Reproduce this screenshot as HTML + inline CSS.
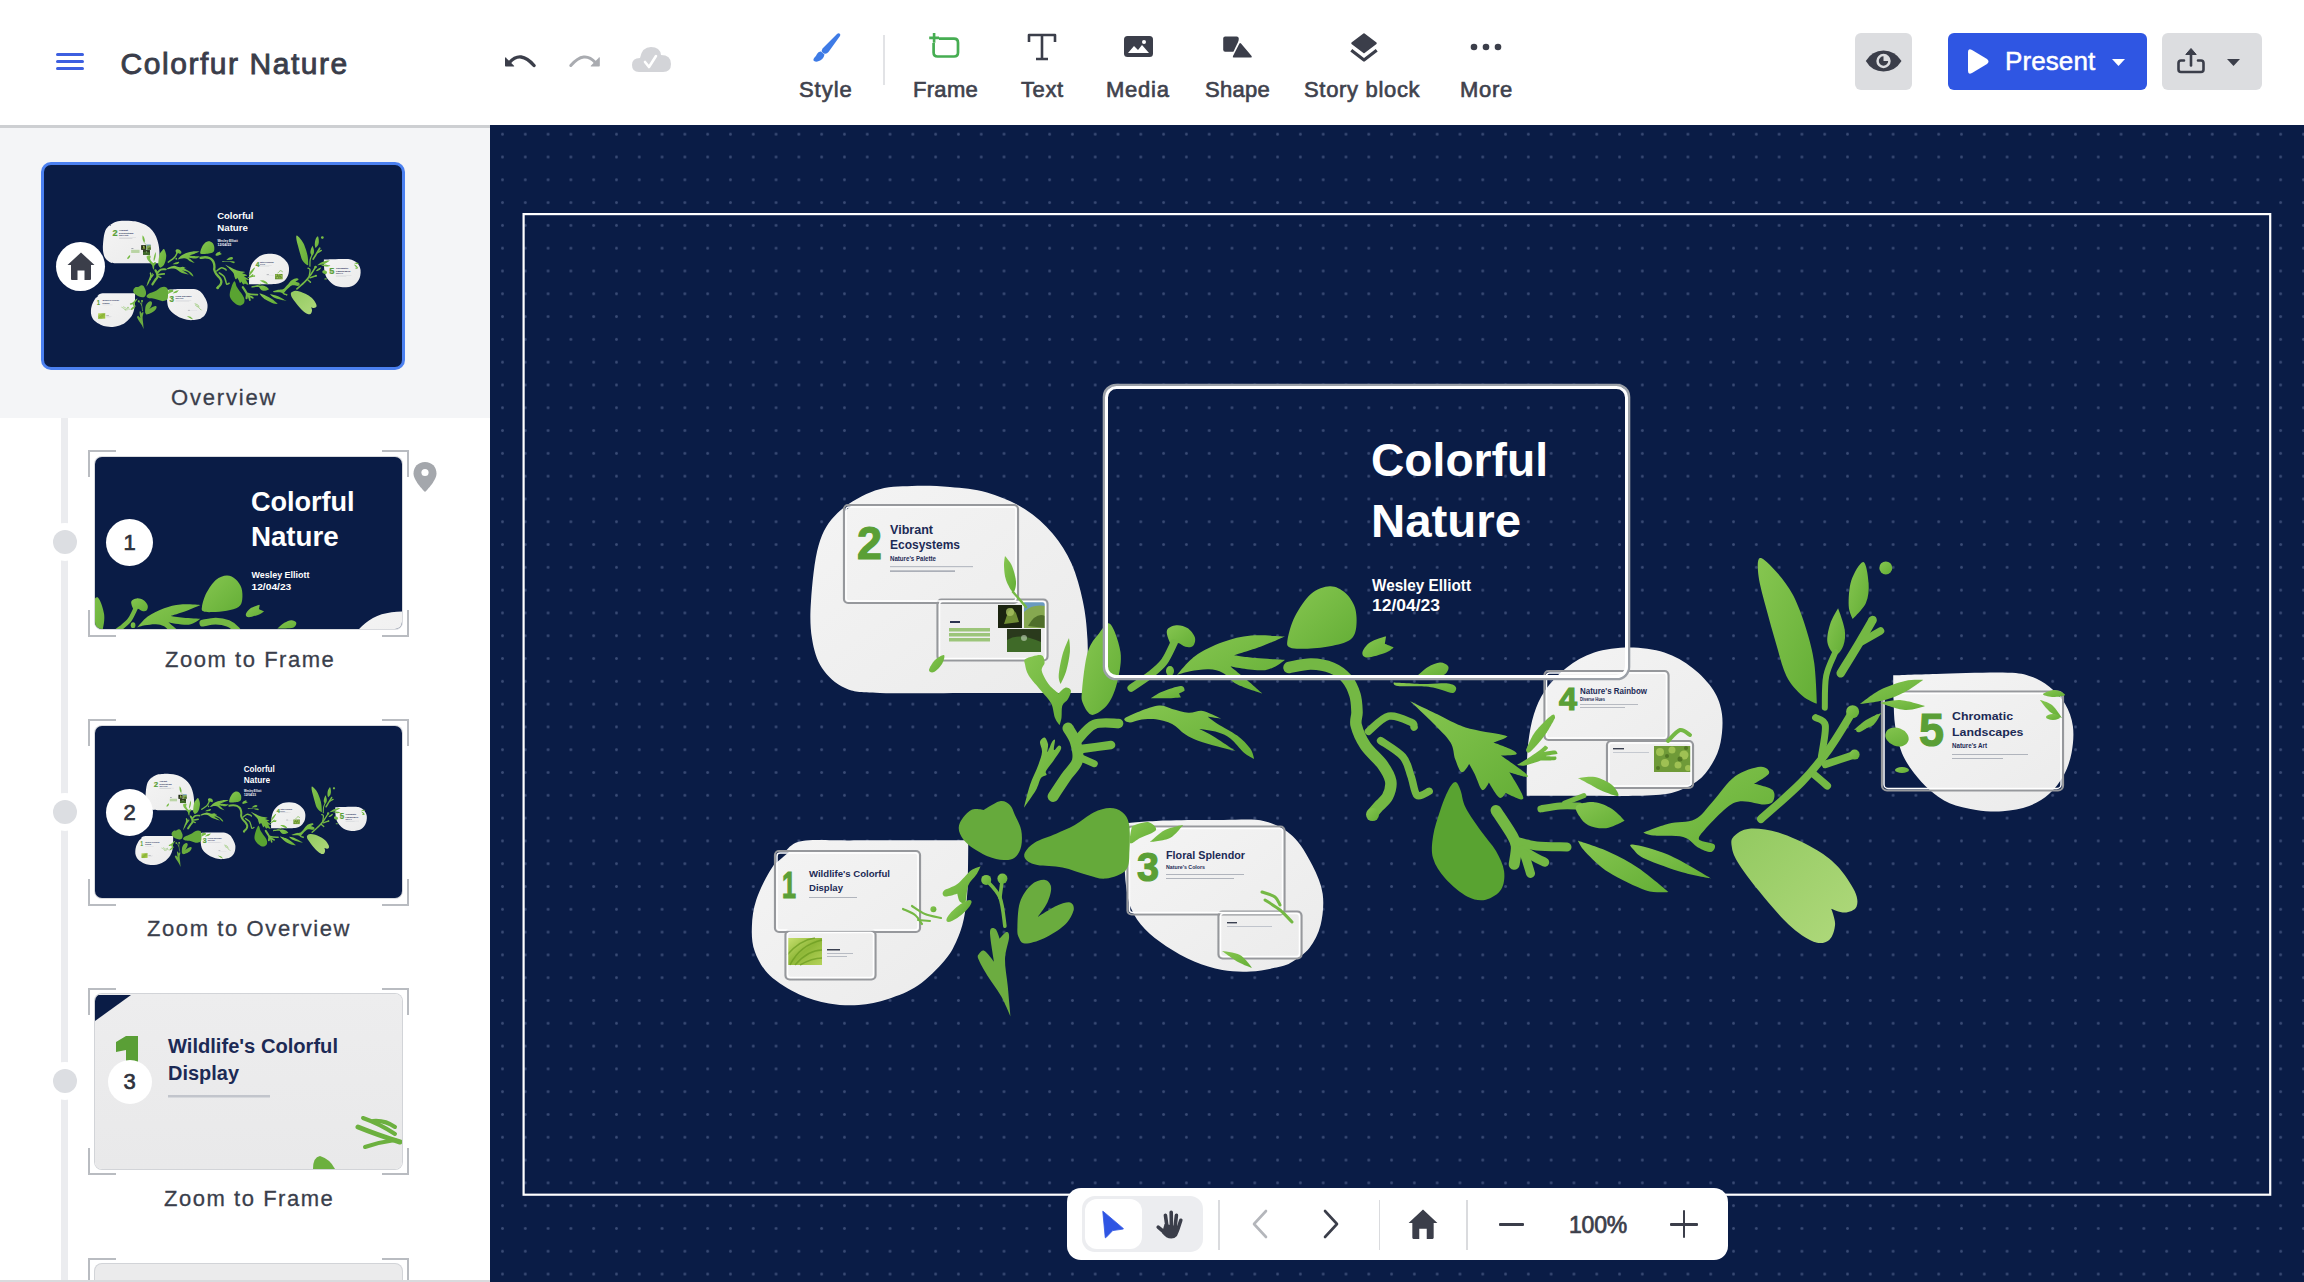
<!DOCTYPE html>
<html><head><meta charset="utf-8">
<style>
*{margin:0;padding:0;box-sizing:border-box}
html,body{width:2304px;height:1282px;overflow:hidden;background:#fff;font-family:"Liberation Sans",sans-serif}
.abs{position:absolute}
#header{position:absolute;left:0;top:0;width:2304px;height:125px;background:#fff}
#sidebar{position:absolute;left:0;top:125px;width:490px;height:1157px;background:#fff;overflow:hidden}
#canvas{position:absolute;left:490px;top:125px;width:1814px;height:1157px;background-color:#0a1c46;overflow:hidden;
 background-image:radial-gradient(circle at center,#3a4b75 0,#34456f 1.1px,rgba(10,28,70,0) 1.8px);
 background-size:22.81px 22.81px;background-position:1.1px -2.2px}
.lbl{position:absolute;font-size:22px;color:#3a3e4b;white-space:nowrap;-webkit-text-stroke:0.3px #3a3e4b}
.tb{position:absolute;font-size:22px;color:#3f424d;white-space:nowrap;-webkit-text-stroke:0.65px #3f424d}
</style></head>
<body>
<svg width="0" height="0" style="position:absolute">
<defs>
 <linearGradient id="blobg" x1="0" y1="0" x2="1" y2="1">
  <stop offset="0" stop-color="#f4f4f4"/><stop offset="1" stop-color="#ebebeb"/>
 </linearGradient>
 <linearGradient id="lg1" x1="0" y1="0" x2="1" y2="1">
  <stop offset="0" stop-color="#86c650"/><stop offset="1" stop-color="#64ae36"/>
 </linearGradient>
 <linearGradient id="lg2" x1="0" y1="0" x2="1" y2="1">
  <stop offset="0" stop-color="#92c960"/><stop offset="1" stop-color="#b0d97c"/>
 </linearGradient>
 <linearGradient id="lg3" x1="0" y1="0" x2="1" y2="1">
  <stop offset="0" stop-color="#6ab53e"/><stop offset="1" stop-color="#5aa333"/>
 </linearGradient>
 <linearGradient id="leafphoto" x1="0" y1="0" x2="1" y2="1">
  <stop offset="0" stop-color="#c8e070"/><stop offset="0.5" stop-color="#8fb838"/><stop offset="1" stop-color="#b5d35a"/>
 </linearGradient>
<g id="scene">
 <!-- blobs -->
 <g fill="url(#blobg)">
  <path d="M1087.5,693.0 C1087.5,693.0 1014.6,693.0 980.0,693.0 C945.4,693.0 902.5,693.8 880.0,693.0 C857.5,692.2 854.7,692.2 845.0,688.0 C835.3,683.8 827.5,676.2 822.0,668.0 C816.5,659.8 813.8,649.7 812.0,638.5 C810.2,627.3 809.9,616.6 811.0,601.0 C812.1,585.4 814.3,559.7 818.7,545.0 C823.1,530.3 828.1,522.1 837.5,513.0 C846.9,503.9 862.6,495.1 875.0,490.6 C887.4,486.1 899.5,486.6 912.0,486.0 C924.5,485.4 937.5,485.9 950.0,487.0 C962.5,488.1 974.5,488.8 987.0,492.5 C999.5,496.2 1013.7,502.1 1024.7,509.0 C1035.7,515.9 1045.0,524.6 1052.8,533.7 C1060.6,542.8 1066.5,552.4 1071.5,563.6 C1076.5,574.8 1080.1,588.3 1082.8,601.0 C1085.5,613.7 1086.7,624.7 1087.5,640.0 C1088.3,655.3 1087.5,693.0 1087.5,693.0 Z"/>
  <path d="M968.3,840.4 C968.3,840.4 968.2,875.9 967.5,889.0 C966.8,902.1 965.6,910.3 963.8,919.0 C961.9,927.7 959.6,934.3 956.4,941.2 C953.2,948.1 951.0,953.0 944.6,960.4 C938.2,967.8 927.3,979.2 917.9,985.6 C908.5,992.0 898.1,995.8 888.2,999.0 C878.3,1002.2 868.5,1004.3 858.6,1005.0 C848.7,1005.7 838.9,1005.1 829.0,1003.4 C819.1,1001.6 809.2,999.2 799.3,994.5 C789.4,989.8 777.0,982.4 769.6,975.3 C762.2,968.1 757.8,959.8 754.8,951.6 C751.8,943.5 751.6,935.0 751.9,926.4 C752.1,917.8 753.3,908.9 756.3,899.7 C759.2,890.6 764.9,879.4 769.6,871.5 C774.3,863.6 779.0,857.3 784.5,852.2 C790.0,847.1 791.4,843.1 802.3,841.1 C813.2,839.1 822.3,840.5 850.0,840.4 C877.7,840.3 968.3,840.4 968.3,840.4 Z"/>
  <path d="M1124.7,823.3 C1124.7,823.3 1149.7,821.0 1166.0,820.5 C1182.3,820.0 1205.9,819.9 1222.3,820.0 C1238.7,820.1 1252.8,818.5 1264.5,821.2 C1276.2,823.9 1284.5,828.7 1292.5,836.0 C1300.5,843.3 1307.2,855.3 1312.2,865.0 C1317.2,874.7 1321.3,884.0 1322.7,894.0 C1324.1,904.0 1322.8,916.0 1320.6,925.0 C1318.4,934.0 1314.2,941.8 1309.4,948.0 C1304.6,954.2 1297.2,958.8 1292.0,962.0 C1286.8,965.2 1285.4,965.4 1278.5,967.0 C1271.6,968.6 1259.8,971.0 1250.4,971.5 C1241.0,972.0 1231.7,971.6 1222.3,970.0 C1212.9,968.4 1203.5,965.6 1194.2,961.6 C1184.9,957.6 1174.4,951.6 1166.2,946.2 C1158.0,940.8 1151.0,935.6 1145.1,929.3 C1139.2,923.0 1134.3,916.5 1131.0,908.3 C1127.7,900.1 1126.5,889.6 1125.4,880.2 C1124.4,870.8 1124.8,861.5 1124.7,852.0 C1124.6,842.5 1124.7,823.3 1124.7,823.3 Z"/>
  <path d="M1526.8,795.7 C1526.8,795.7 1526.5,779.3 1526.8,770.4 C1527.0,761.5 1527.1,751.7 1528.3,742.3 C1529.5,732.9 1531.1,722.9 1533.9,714.2 C1536.7,705.6 1539.7,698.1 1545.1,690.4 C1550.5,682.7 1558.0,674.2 1566.2,667.9 C1574.4,661.6 1583.7,655.9 1594.2,652.5 C1604.7,649.1 1617.6,647.5 1629.3,647.5 C1641.0,647.5 1653.9,649.1 1664.4,652.5 C1674.9,655.9 1684.3,661.6 1692.5,667.9 C1700.7,674.2 1708.7,682.7 1713.6,690.4 C1718.5,698.1 1720.8,705.6 1722.0,714.2 C1723.2,722.9 1722.2,734.1 1720.6,742.3 C1719.0,750.5 1716.2,756.8 1712.2,763.4 C1708.2,770.0 1703.5,776.7 1696.7,781.6 C1689.9,786.5 1681.5,790.5 1671.5,792.9 C1661.5,795.2 1651.7,795.2 1636.4,795.7 C1621.2,796.2 1598.3,795.7 1580.0,795.7 C1561.7,795.7 1526.8,795.7 1526.8,795.7 Z"/>
  <path d="M1893.2,675.3 C1893.2,675.3 1918.1,674.3 1936.3,673.9 C1954.5,673.5 1987.1,672.3 2002.6,672.6 C2018.1,672.9 2021.5,673.6 2029.2,675.9 C2036.9,678.2 2043.0,681.9 2049.0,686.5 C2055.0,691.1 2061.0,697.2 2065.0,703.8 C2069.0,710.4 2071.8,718.1 2072.9,726.3 C2074.0,734.5 2073.2,744.6 2071.6,752.8 C2070.0,761.0 2067.4,768.5 2063.6,775.4 C2059.8,782.3 2054.7,788.9 2049.0,794.0 C2043.3,799.1 2036.9,803.0 2029.2,805.9 C2021.5,808.8 2011.4,810.5 2002.6,811.2 C1993.8,811.9 1984.9,811.2 1976.1,809.9 C1967.3,808.6 1957.3,806.5 1949.6,803.2 C1941.9,799.9 1935.7,795.1 1929.7,790.0 C1923.7,784.9 1918.5,778.9 1913.8,772.7 C1909.1,766.5 1904.9,760.5 1901.8,752.8 C1898.7,745.1 1896.6,735.1 1895.2,726.3 C1893.8,717.5 1893.9,708.3 1893.6,699.8 C1893.3,691.3 1893.2,675.3 1893.2,675.3 Z"/>
 </g>
 <!-- slide photos / bars -->
 <rect x="998" y="605" width="24" height="23" fill="#1b2410"/>
 <path d="M1004,624 L1008,612 L1012,608 L1016,613 L1019,622 Z" fill="#7a9a3a" opacity="0.9"/>
 <circle cx="1010" cy="612" r="4" fill="#a8c060" opacity="0.8"/>
 <rect x="1024" y="602" width="21" height="26" fill="#6a9ac0"/>
 <path d="M1024,628 L1024,612 Q1032,604 1045,606 L1045,628 Z" fill="#86a850"/>
 <path d="M1028,626 Q1036,612 1045,616 L1045,628 Z" fill="#4f6e2a"/>
 <rect x="1007" y="629" width="34" height="23" fill="#2a3a1c"/>
 <path d="M1007,652 L1007,640 Q1020,632 1041,642 L1041,652 Z" fill="#3f6a28"/>
 <circle cx="1024" cy="638" r="3" fill="#c8d8c0" opacity="0.6"/>
 <rect x="950" y="621" width="10" height="2" fill="#2a3350"/>
 <rect x="949" y="628" width="41" height="3.5" fill="#9cc57a"/>
 <rect x="949" y="633" width="41" height="3.5" fill="#9cc57a"/>
 <rect x="949" y="638" width="41" height="3.5" fill="#9cc57a"/>
 <rect x="787" y="938" width="35" height="27" fill="url(#leafphoto)"/>
 <path d="M790,965 Q800,945 822,940 M795,965 Q808,950 822,950 M800,965 Q812,958 822,958 M787,955 Q800,940 815,938" stroke="#6a9a20" stroke-width="1.5" fill="none" opacity="0.7"/>
 <rect x="1654" y="746" width="37" height="26" fill="#6f9a38"/>
 <g fill="#a8c858" opacity="0.85"><circle cx="1660" cy="752" r="4"/><circle cx="1672" cy="750" r="3.5"/><circle cx="1684" cy="755" r="4.5"/><circle cx="1665" cy="763" r="4"/><circle cx="1678" cy="765" r="3.5"/><circle cx="1688" cy="768" r="3"/></g>
 <g fill="#4a6e20" opacity="0.8"><circle cx="1667" cy="756" r="2"/><circle cx="1680" cy="759" r="2.5"/><circle cx="1658" cy="768" r="2"/><circle cx="1686" cy="748" r="2"/></g>
 <!-- navy corner triangles -->
 <path d="M776,852 L789,852 L776,863 Z" fill="#0a1c46"/>
 <path d="M845,506 L851,506 L845,511 Z" fill="#0a1c46"/>
 <!-- slide texts -->
 <g font-family="Liberation Sans" font-weight="bold">
  <text x="857" y="558.5" font-size="46" fill="#5a9f36" stroke="#5a9f36" stroke-width="1.2" textLength="25" lengthAdjust="spacingAndGlyphs">2</text>
  <text x="890" y="533.7" font-size="12.3" fill="#1c2a55" textLength="43" lengthAdjust="spacingAndGlyphs">Vibrant</text>
  <text x="890" y="549.4" font-size="12.3" fill="#1c2a55" textLength="70" lengthAdjust="spacingAndGlyphs">Ecosystems</text>
  <text x="890" y="561" font-size="6.3" fill="#1c2a55" textLength="46" lengthAdjust="spacingAndGlyphs">Nature's Palette</text>
  <rect x="890" y="566" width="83" height="1.2" fill="#b8bcc4"/>
  <rect x="890" y="570.5" width="65" height="1.2" fill="#8d93a0"/>

  <text x="782" y="898.2" font-size="37" fill="#5a9f36" stroke="#5a9f36" stroke-width="1.2" textLength="14" lengthAdjust="spacingAndGlyphs">1</text>
  <text x="809" y="877.4" font-size="9.8" fill="#1c2a55" textLength="81" lengthAdjust="spacingAndGlyphs">Wildlife's Colorful</text>
  <text x="809" y="890.5" font-size="9.8" fill="#1c2a55" textLength="34" lengthAdjust="spacingAndGlyphs">Display</text>
  <rect x="809" y="897" width="48" height="1" fill="#b0b4bc"/>
  <rect x="827" y="949" width="13" height="1.5" fill="#3a4050"/>
  <rect x="827" y="953" width="26" height="1" fill="#b8bcc4"/>
  <rect x="827" y="956" width="20" height="1" fill="#b8bcc4"/>

  <text x="1137" y="881" font-size="41" fill="#5a9f36" stroke="#5a9f36" stroke-width="1.2" textLength="22" lengthAdjust="spacingAndGlyphs">3</text>
  <text x="1166" y="858.9" font-size="11.2" fill="#1c2a55" textLength="79" lengthAdjust="spacingAndGlyphs">Floral Splendor</text>
  <text x="1166" y="868.7" font-size="6" fill="#1c2a55" textLength="39" lengthAdjust="spacingAndGlyphs">Nature's Colors</text>
  <rect x="1166" y="874" width="78" height="1" fill="#b0b4bc"/>
  <rect x="1166" y="878" width="68" height="1" fill="#b0b4bc"/>
  <rect x="1227" y="922" width="10" height="1.4" fill="#3a4050"/>
  <rect x="1227" y="926" width="45" height="1" fill="#c0c4cc"/>

  <text x="1559" y="710" font-size="32" fill="#5a9f36" stroke="#5a9f36" stroke-width="1.2" textLength="18" lengthAdjust="spacingAndGlyphs">4</text>
  <text x="1580" y="693.5" font-size="8.2" fill="#1c2a55" textLength="67" lengthAdjust="spacingAndGlyphs">Nature's Rainbow</text>
  <text x="1580" y="700.5" font-size="5" fill="#1c2a55" textLength="25" lengthAdjust="spacingAndGlyphs">Diverse Hues</text>
  <rect x="1580" y="704" width="58" height="0.9" fill="#b0b4bc"/>
  <rect x="1580" y="707" width="45" height="0.9" fill="#b0b4bc"/>
  <rect x="1613" y="748" width="11" height="1.4" fill="#3a4050"/>
  <rect x="1613" y="752" width="36" height="0.9" fill="#c0c4cc"/>

  <text x="1919" y="745.5" font-size="47" fill="#5a9f36" stroke="#5a9f36" stroke-width="1.2" textLength="25" lengthAdjust="spacingAndGlyphs">5</text>
  <text x="1952" y="719.7" font-size="11" fill="#1c2a55" textLength="61" lengthAdjust="spacingAndGlyphs">Chromatic</text>
  <text x="1952" y="735.9" font-size="11" fill="#1c2a55" textLength="71.5" lengthAdjust="spacingAndGlyphs">Landscapes</text>
  <text x="1952" y="747.5" font-size="6.3" fill="#1c2a55" textLength="35" lengthAdjust="spacingAndGlyphs">Nature's Art</text>
  <rect x="1952" y="754" width="76" height="1" fill="#b0b4bc"/>
  <rect x="1952" y="758" width="51" height="1" fill="#b0b4bc"/>
 </g>
 <!-- slide frames -->
 <g fill="none" style="visibility:var(--fv, visible)">
  <g stroke="#96989c" stroke-width="2.2">
   <rect x="844" y="505" width="174" height="98" rx="4"/>
   <rect x="937.5" y="599.5" width="110" height="61" rx="4"/>
   <rect x="775" y="851" width="145" height="81" rx="4"/>
   <rect x="785.5" y="930.5" width="90" height="49" rx="4"/>
   <rect x="1127.5" y="826.5" width="157" height="88" rx="4"/>
   <rect x="1218.5" y="911.5" width="83" height="47" rx="4"/>
   <rect x="1544.5" y="671" width="124" height="69" rx="4"/>
   <rect x="1607" y="741" width="86" height="47" rx="4"/>
   <rect x="1882" y="691.5" width="181" height="99" rx="5"/>
  </g>
  <g stroke="#ffffff" stroke-width="1.5">
   <rect x="846" y="507" width="170" height="94" rx="3"/>
   <rect x="939.5" y="601.5" width="106" height="57" rx="3"/>
   <rect x="777" y="853" width="141" height="77" rx="3"/>
   <rect x="787.5" y="932.5" width="86" height="45" rx="3"/>
   <rect x="1129.5" y="828.5" width="153" height="84" rx="3"/>
   <rect x="1220.5" y="913.5" width="79" height="43" rx="3"/>
   <rect x="1546.5" y="673" width="120" height="65" rx="3"/>
   <rect x="1609" y="743" width="82" height="43" rx="3"/>
   <rect x="1884" y="693.5" width="177" height="95" rx="4"/>
  </g>
 </g>
 <!-- title text -->
 <g font-family="Liberation Sans" font-weight="bold" fill="#ffffff">
  <text x="1371" y="476" font-size="47" textLength="177" lengthAdjust="spacingAndGlyphs">Colorful</text>
  <text x="1371" y="536.7" font-size="47" textLength="150" lengthAdjust="spacingAndGlyphs">Nature</text>
  <text x="1372" y="590.8" font-size="16.2" textLength="99" lengthAdjust="spacingAndGlyphs">Wesley Elliott</text>
  <text x="1372" y="610.6" font-size="16.2" textLength="68" lengthAdjust="spacingAndGlyphs">12/04/23</text>
 </g>
 <!-- leaves -->
 <g id="leaves" fill="url(#lg1)" stroke-linecap="round" stroke-linejoin="round">
    <path d="M1110.2,624.0 C1113.8,627.1 1119.2,642.7 1120.5,652.1 C1121.8,661.5 1119.7,671.6 1117.7,680.2 C1115.7,688.8 1112.5,697.8 1108.3,703.6 C1104.1,709.4 1096.6,714.9 1092.4,714.9 C1088.2,714.9 1084.7,707.8 1083.0,703.6 C1081.3,699.4 1081.3,698.2 1082.1,689.6 C1082.9,681.0 1084.9,661.5 1087.7,652.1 C1090.5,642.7 1095.2,638.1 1099.0,633.4 C1102.8,628.7 1106.6,620.9 1110.2,624.0 Z"/>
  <path d="M1069.0,638.1 C1069.0,638.1 1070.4,646.6 1069.9,652.1 C1069.4,657.6 1067.8,665.6 1066.2,670.9 C1064.7,676.2 1060.6,684.0 1060.6,684.0 C1060.6,684.0 1058.4,680.3 1058.7,675.5 C1059.0,670.7 1060.7,661.2 1062.4,655.0 C1064.1,648.8 1069.0,638.1 1069.0,638.1 Z"/>
  <path d="M1025.9,658.7 C1028.6,657.2 1037.8,654.4 1040.9,655.0 C1044.0,655.6 1044.4,659.8 1044.6,662.4 C1044.8,665.0 1041.0,667.1 1041.8,670.9 C1042.6,674.6 1046.5,681.2 1049.3,684.9 C1052.1,688.6 1058.7,693.3 1058.7,693.3 C1058.7,693.3 1063.2,688.2 1065.2,687.7 C1067.2,687.2 1070.4,688.6 1070.9,690.5 C1071.4,692.4 1069.4,696.5 1068.0,699.0 C1066.6,701.5 1063.5,702.4 1062.4,705.5 C1061.3,708.6 1062.0,714.4 1061.5,717.7 C1061.0,721.0 1059.6,725.2 1059.6,725.2 C1059.6,725.2 1056.3,721.3 1054.9,717.7 C1053.5,714.1 1053.5,708.1 1051.2,703.6 C1048.9,699.1 1044.7,695.2 1040.9,690.5 C1037.2,685.8 1031.4,679.9 1028.7,675.5 C1026.0,671.1 1025.5,667.1 1025.0,664.3 C1024.5,661.5 1023.3,660.2 1025.9,658.7 Z"/>
  <path d="M1053.1,796.4 C1055.2,793.2 1062.0,782.9 1066.0,777.0 C1070.0,771.1 1075.8,766.7 1077.4,760.9 C1079.0,755.1 1077.1,747.6 1075.5,742.1 C1073.9,736.6 1069.2,730.4 1068.0,728.1" fill="none" stroke="#74b844" stroke-width="11"/>
  <path d="M1077.4,740.3 C1080.2,737.6 1087.4,727.1 1094.3,724.3 C1101.2,721.5 1114.5,723.5 1118.6,723.4" fill="none" stroke="#74b844" stroke-width="9.5"/>
  <path d="M1083.0,748.7 C1087.7,748.1 1106.4,745.6 1111.1,745.0" fill="none" stroke="#74b844" stroke-width="8.5"/>
  <path d="M1081.2,758.0 C1083.4,759.0 1092.1,762.8 1094.3,763.7" fill="none" stroke="#74b844" stroke-width="7"/>
  <path d="M1024.0,807.7 C1024.0,807.7 1027.7,792.0 1030.0,785.0 C1032.3,778.0 1036.1,771.0 1038.1,765.5 C1040.1,760.0 1041.7,755.9 1042.0,752.0 C1042.3,748.1 1039.6,744.4 1040.0,742.0 C1040.4,739.6 1043.3,737.2 1044.6,737.5 C1045.9,737.8 1047.5,741.6 1048.0,744.0 C1048.5,746.4 1046.8,752.3 1047.5,752.0 C1048.2,751.7 1050.8,744.0 1052.0,742.0 C1053.2,740.0 1054.7,738.7 1055.0,740.0 C1055.3,741.3 1053.3,749.1 1054.0,750.0 C1054.7,750.9 1057.8,745.7 1059.0,745.5 C1060.2,745.3 1061.8,746.6 1061.0,749.0 C1060.2,751.4 1056.5,756.3 1054.0,760.0 C1051.5,763.7 1047.2,768.5 1046.0,771.0 C1044.8,773.5 1047.3,773.8 1046.5,775.0 C1045.7,776.2 1042.8,775.5 1041.0,778.0 C1039.2,780.5 1038.8,785.0 1036.0,790.0 C1033.2,795.0 1024.0,807.7 1024.0,807.7 Z"/>
  <path d="M960.0,822.5 C961.9,818.5 967.2,812.1 971.2,810.0 C975.2,807.9 983.7,810.0 983.7,810.0 C983.7,810.0 995.5,802.0 999.9,801.2 C1004.3,800.4 1007.4,802.7 1009.9,805.0 C1012.4,807.3 1013.0,810.8 1014.9,815.0 C1016.8,819.2 1020.2,824.8 1021.2,830.0 C1022.2,835.2 1022.2,841.6 1021.2,846.2 C1020.2,850.8 1017.8,855.1 1014.9,857.4 C1012.0,859.7 1008.3,860.1 1003.7,859.9 C999.1,859.7 993.3,858.7 987.5,856.2 C981.7,853.7 973.3,848.6 968.7,844.9 C964.1,841.1 961.5,837.4 960.0,833.7 C958.5,830.0 958.1,826.5 960.0,822.5 Z" fill="#66aa3c"/>
  <path d="M1024.9,852.4 C1026.4,849.5 1029.7,845.5 1034.9,842.4 C1040.1,839.3 1049.4,836.6 1056.1,833.7 C1062.8,830.8 1068.5,828.5 1074.8,825.0 C1081.0,821.5 1087.8,815.3 1093.6,812.5 C1099.4,809.7 1105.1,808.2 1109.8,808.1 C1114.5,808.0 1118.8,809.4 1122.0,812.0 C1125.2,814.6 1127.8,817.7 1129.0,824.0 C1130.2,830.3 1130.0,842.3 1129.5,850.0 C1129.0,857.7 1129.9,865.2 1126.0,870.0 C1122.1,874.8 1112.5,877.8 1106.0,878.6 C1099.5,879.4 1094.6,876.8 1087.3,874.9 C1080.0,873.0 1070.7,869.1 1062.4,867.4 C1054.1,865.7 1043.4,866.1 1037.4,864.9 C1031.4,863.6 1028.3,862.0 1026.2,859.9 C1024.1,857.8 1023.5,855.3 1024.9,852.4 Z" fill="#65aa3a"/>
  <path d="M1017.4,927.3 C1017.6,921.5 1017.6,909.5 1019.9,902.4 C1022.2,895.3 1026.9,888.6 1031.1,884.9 C1035.3,881.1 1041.6,879.5 1044.9,879.9 C1048.2,880.3 1050.7,883.6 1051.1,887.4 C1051.5,891.1 1049.7,897.4 1047.4,902.4 C1045.1,907.4 1037.4,917.3 1037.4,917.3 C1037.4,917.3 1050.7,908.6 1056.1,906.1 C1061.5,903.6 1067.0,901.8 1069.9,902.4 C1072.8,903.0 1074.4,906.2 1073.6,909.9 C1072.8,913.6 1069.9,920.0 1064.9,924.8 C1059.9,929.6 1050.3,935.5 1043.6,938.6 C1036.9,941.7 1029.1,943.8 1024.9,943.6 C1020.8,943.4 1020.0,940.0 1018.7,937.3 C1017.5,934.6 1017.2,933.1 1017.4,927.3 Z" fill="#6aac3e"/>
  <path d="M1004.9,926.1 C1004.1,921.3 1003.0,905.1 999.9,897.4 C996.8,889.7 988.5,882.8 986.2,879.9" fill="none" stroke="#74b844" stroke-width="3.6"/>
  <path d="M999.9,897.4 C1000.3,894.3 1002.0,881.7 1002.4,878.6" fill="none" stroke="#74b844" stroke-width="3.6"/>
  <circle cx="986.2" cy="879.9" r="5"/>
  <circle cx="1002.4" cy="878.6" r="5"/>
  <path d="M979.1,953.7 C980.1,952.4 982.1,949.6 984.6,951.0 C987.1,952.4 994.1,961.9 994.1,961.9 C994.1,961.9 989.8,937.4 990.0,931.9 C990.2,926.4 993.9,928.0 995.5,929.1 C997.1,930.2 999.6,938.7 999.6,938.7 C999.6,938.7 1004.8,932.1 1006.4,931.9 C1008.0,931.7 1009.3,932.8 1009.1,937.3 C1008.9,941.8 1005.2,950.9 1005.0,959.1 C1004.8,967.3 1006.9,976.9 1007.8,986.4 C1008.7,995.9 1010.5,1016.4 1010.5,1016.4 C1010.5,1016.4 1004.9,1002.8 1001.0,996.0 C997.1,989.2 991.1,981.6 987.3,975.5 C983.5,969.4 979.8,962.7 978.4,959.1 C977.0,955.5 978.1,955.1 979.1,953.7 Z" fill="#6cac40"/>
  <path d="M980.5,866.4 C980.5,866.4 978.4,871.4 976.4,874.6 C974.4,877.8 970.0,881.0 968.2,885.5 C966.4,890.0 966.9,899.1 965.5,901.8 C964.1,904.5 961.4,903.1 960.0,901.8 C958.6,900.4 957.3,893.7 957.3,893.7 C957.3,893.7 947.3,896.9 945.0,896.4 C942.7,895.9 941.7,892.9 943.7,890.9 C945.8,888.9 952.8,887.5 957.3,884.1 C961.8,880.7 967.0,873.5 970.9,870.5 C974.8,867.5 980.5,866.4 980.5,866.4 Z"/>
  <ellipse cx="959" cy="911" rx="16" ry="4.5" transform="rotate(-40 959 911)"/>
  <circle cx="933.4" cy="909.3" r="3"/>
  <path d="M903.0,909.0 C905.0,910.0 911.8,912.5 915.0,915.0 C918.2,917.5 920.8,922.5 922.0,924.0" fill="none" stroke="#74b844" stroke-width="2.2"/>
  <path d="M912.0,906.0 C914.2,907.3 920.2,912.0 925.0,914.0 C929.8,916.0 938.3,917.3 941.0,918.0" fill="none" stroke="#74b844" stroke-width="2.2"/>
  <path d="M918.0,920.0 C920.0,920.2 928.0,920.8 930.0,921.0" fill="none" stroke="#74b844" stroke-width="2"/>
  <path d="M1005.0,556.0 C1005.0,556.0 1010.2,561.7 1012.0,566.0 C1013.8,570.3 1015.8,577.7 1016.0,582.0 C1016.2,586.3 1014.7,592.3 1013.0,592.0 C1011.3,591.7 1007.5,584.3 1006.0,580.0 C1004.5,575.7 1004.2,570.0 1004.0,566.0 C1003.8,562.0 1005.0,556.0 1005.0,556.0 Z"/>
  <path d="M1013.0,592.0 C1014.2,593.3 1017.8,597.5 1020.0,600.0 C1022.2,602.5 1025.0,605.8 1026.0,607.0" fill="none" stroke="#74b844" stroke-width="2.5"/>
  <path d="M929.0,670.0 C929.2,668.0 932.5,662.5 935.0,660.0 C937.5,657.5 942.8,654.3 944.0,655.0 C945.2,655.7 943.7,661.2 942.0,664.0 C940.3,666.8 936.2,671.0 934.0,672.0 C931.8,673.0 928.8,672.0 929.0,670.0 Z"/>
  <path d="M1287.5,639.9 C1288.3,634.7 1291.0,623.9 1295.0,616.2 C1299.0,608.5 1305.4,598.7 1311.2,593.7 C1317.0,588.7 1324.3,586.4 1329.9,586.2 C1335.5,586.0 1340.7,589.0 1344.9,592.5 C1349.1,596.0 1353.0,601.7 1354.9,607.5 C1356.8,613.3 1357.0,622.0 1356.2,627.4 C1355.4,632.8 1354.3,636.8 1349.9,639.9 C1345.5,643.0 1337.4,644.7 1329.9,646.2 C1322.4,647.7 1311.7,648.5 1305.0,648.7 C1298.3,648.9 1292.9,648.9 1290.0,647.4 C1287.1,645.9 1286.7,645.1 1287.5,639.9 Z"/>
  <path d="M1362.4,652.4 C1362.8,649.9 1366.0,645.1 1369.9,642.4 C1373.9,639.7 1386.1,636.2 1386.1,636.2 C1386.1,636.2 1384.9,643.7 1384.9,643.7 C1384.9,643.7 1393.6,647.4 1393.6,647.4 C1393.6,647.4 1390.5,650.7 1386.1,652.4 C1381.7,654.1 1371.4,657.4 1367.4,657.4 C1363.5,657.4 1362.0,654.9 1362.4,652.4 Z"/>
  <path d="M1166.8,630.9 C1167.5,627.4 1172.8,625.8 1176.2,625.3 C1179.6,624.8 1184.3,626.1 1187.4,628.1 C1190.5,630.1 1194.0,634.5 1194.9,637.5 C1195.8,640.5 1194.6,644.4 1193.0,645.9 C1191.4,647.4 1188.0,647.3 1185.5,646.8 C1183.0,646.3 1180.2,643.2 1178.0,643.1 C1175.8,643.0 1173.9,648.0 1172.0,646.0 C1170.1,644.0 1166.1,634.4 1166.8,630.9 Z"/>
  <path d="M1174.0,643.0 C1172.3,646.2 1168.0,656.7 1164.0,662.0 C1160.0,667.3 1155.5,670.7 1150.0,675.0 C1144.5,679.3 1134.3,685.8 1131.2,688.0" fill="none" stroke="#74b844" stroke-width="7.5"/>
  <ellipse cx="1170" cy="671" rx="4" ry="5" transform="rotate(0 1170 671)"/>
  <path d="M1177.1,674.9 C1177.1,674.9 1187.2,661.7 1194.9,656.2 C1202.6,650.7 1213.6,645.5 1223.0,642.1 C1232.4,638.7 1240.8,636.5 1251.1,635.6 C1261.4,634.7 1284.8,636.5 1284.8,636.5 C1284.8,636.5 1268.8,643.7 1260.4,646.8 C1252.0,649.9 1234.2,655.2 1234.2,655.2 C1234.2,655.2 1247.4,657.3 1255.8,658.1 C1264.2,658.9 1284.8,659.9 1284.8,659.9 C1284.8,659.9 1274.1,669.1 1265.1,670.2 C1256.0,671.3 1230.5,666.5 1230.5,666.5 C1230.5,666.5 1241.1,675.1 1246.4,679.6 C1251.7,684.1 1262.3,693.6 1262.3,693.6 C1262.3,693.6 1243.5,687.7 1237.0,684.3 C1230.5,680.9 1227.7,675.5 1223.0,673.0 C1218.3,670.5 1214.5,669.6 1209.0,669.3 C1203.5,669.0 1195.5,670.3 1190.2,671.2 C1184.9,672.1 1177.1,674.9 1177.1,674.9 Z"/>
  <path d="M1150.9,698.3 C1150.9,698.3 1157.1,693.8 1162.1,691.8 C1167.1,689.8 1177.2,686.3 1180.9,686.1 C1184.7,685.9 1184.6,690.8 1184.6,690.8 C1184.6,690.8 1179.0,693.6 1179.0,693.6 C1179.0,693.6 1180.9,697.4 1180.9,697.4 C1180.9,697.4 1171.8,698.1 1166.8,698.3 C1161.8,698.4 1150.9,698.3 1150.9,698.3 Z"/>
  <path d="M1124.6,718.6 C1126.2,716.8 1133.8,713.7 1139.5,711.5 C1145.2,709.3 1153.7,706.0 1159.1,705.6 C1164.5,705.2 1167.2,707.7 1172.1,708.9 C1177.0,710.1 1183.5,712.5 1188.4,712.8 C1193.3,713.1 1197.6,710.6 1201.4,710.8 C1205.2,711.0 1207.8,712.8 1211.1,714.1 C1214.3,715.4 1220.9,718.6 1220.9,718.6 C1220.9,718.6 1207.9,716.7 1207.9,716.7 C1207.9,716.7 1212.8,720.8 1217.7,723.9 C1222.6,727.0 1231.8,731.5 1237.2,735.6 C1242.6,739.7 1247.4,744.7 1250.2,748.6 C1253.0,752.5 1254.1,759.0 1254.1,759.0 C1254.1,759.0 1247.6,755.9 1243.7,752.5 C1239.8,749.1 1235.0,742.2 1230.7,738.8 C1226.4,735.4 1222.9,733.9 1217.7,732.3 C1212.5,730.7 1199.4,729.1 1199.4,729.1 C1199.4,729.1 1208.3,733.2 1214.4,736.9 C1220.5,740.6 1235.9,751.2 1235.9,751.2 C1235.9,751.2 1224.0,748.3 1217.7,746.6 C1211.4,744.9 1203.5,742.8 1198.1,740.8 C1192.7,738.8 1189.4,737.1 1185.1,734.3 C1180.8,731.5 1177.0,726.4 1172.1,723.9 C1167.2,721.4 1161.2,720.0 1155.8,719.3 C1150.4,718.6 1143.8,719.3 1139.5,719.9 C1135.2,720.5 1132.3,722.8 1129.8,722.6 C1127.3,722.4 1123.0,720.5 1124.6,718.6 Z"/>
  <path d="M1289.0,667.5 C1292.7,666.9 1303.8,663.9 1311.0,664.0 C1318.2,664.1 1326.0,665.5 1332.0,668.0 C1338.0,670.5 1343.2,674.5 1347.0,679.0 C1350.8,683.5 1353.3,689.5 1355.0,695.0 C1356.7,700.5 1356.8,706.9 1357.0,712.0 C1357.2,717.1 1354.8,719.8 1356.2,725.4 C1357.6,731.0 1361.0,739.0 1365.4,745.6 C1369.8,752.2 1378.4,759.0 1382.6,764.9 C1386.8,770.8 1389.8,775.9 1390.7,781.1 C1391.6,786.3 1389.7,792.1 1387.7,796.3 C1385.7,800.5 1381.0,803.7 1378.5,806.5 C1376.0,809.3 1373.9,811.9 1373.0,813.0" fill="none" stroke="#74b844" stroke-width="11.5"/>
  <circle cx="1372.5" cy="814.6" r="6.5"/>
  <path d="M1368.4,731.4 C1371.8,728.9 1381.6,717.7 1388.7,716.2 C1395.8,714.7 1406.8,720.5 1411.0,722.3 C1415.2,724.1 1413.5,726.2 1414.0,727.0" fill="none" stroke="#74b844" stroke-width="7.5"/>
  <path d="M1380.6,740.6 C1384.3,743.3 1397.8,750.9 1402.9,756.8 C1408.0,762.7 1408.6,769.7 1411.0,776.1 C1413.4,782.5 1414.1,792.8 1417.1,795.3 C1420.1,797.8 1427.2,792.0 1429.2,791.3" fill="none" stroke="#74b844" stroke-width="7.5"/>
  <path d="M1416.0,677.0 C1416.0,677.0 1424.0,669.4 1428.0,667.0 C1432.0,664.6 1436.7,662.7 1440.0,662.5 C1443.3,662.3 1446.8,664.4 1448.0,666.0 C1449.2,667.6 1448.3,670.3 1447.0,672.0 C1445.7,673.7 1445.2,675.2 1440.0,676.0 C1434.8,676.8 1416.0,677.0 1416.0,677.0 Z"/>
  <path d="M1393.7,682.4 C1393.7,682.4 1417.0,683.8 1426.0,684.0 C1435.0,684.2 1443.0,682.9 1448.0,683.5 C1453.0,684.1 1455.2,685.8 1456.0,687.4 C1456.8,689.0 1455.3,692.6 1453.0,693.0 C1450.7,693.4 1446.5,691.1 1442.0,690.0 C1437.5,688.9 1433.3,687.2 1426.0,686.5 C1418.7,685.8 1403.4,686.7 1398.0,686.0 C1392.6,685.3 1393.7,682.4 1393.7,682.4 Z"/>
  <path d="M1410.3,701.2 C1410.3,701.2 1428.2,709.9 1437.4,714.3 C1446.6,718.7 1454.6,724.0 1465.5,727.4 C1476.4,730.8 1496.2,733.2 1502.9,734.9 C1509.6,736.6 1507.3,736.5 1505.7,737.7 C1504.1,739.0 1493.5,742.4 1493.5,742.4 C1493.5,742.4 1508.5,747.9 1512.3,749.9 C1516.0,751.9 1517.9,753.6 1516.0,754.5 C1514.1,755.4 1501.0,755.5 1501.0,755.5 C1501.0,755.5 1520.2,768.7 1524.4,772.3 C1528.6,775.9 1528.8,777.0 1526.3,777.0 C1523.8,777.0 1509.4,772.3 1509.4,772.3 C1509.4,772.3 1519.6,788.4 1521.6,792.9 C1523.6,797.4 1524.2,799.4 1521.6,799.4 C1518.9,799.4 1505.7,792.9 1505.7,792.9 C1505.7,792.9 1502.0,799.3 1499.2,797.6 C1496.4,795.9 1488.9,782.6 1488.9,782.6 C1488.9,782.6 1484.7,791.5 1482.3,790.1 C1479.9,788.7 1477.0,778.6 1474.8,774.2 C1472.6,769.8 1469.2,763.9 1469.2,763.9 C1469.2,763.9 1464.0,773.1 1461.7,772.3 C1459.4,771.5 1457.1,764.2 1455.2,759.2 C1453.3,754.2 1454.2,748.5 1450.5,742.4 C1446.8,736.3 1439.4,729.6 1432.7,722.7 C1426.0,715.8 1410.3,701.2 1410.3,701.2 Z"/>
  <path d="M1455.4,782.1 C1457.4,782.1 1458.8,786.0 1460.5,790.2 C1462.2,794.4 1462.2,800.7 1465.6,807.5 C1469.0,814.3 1475.7,823.5 1480.8,830.8 C1485.9,838.1 1492.1,844.4 1496.0,851.1 C1499.9,857.9 1503.2,864.9 1504.1,871.3 C1504.9,877.7 1504.1,884.9 1501.1,889.6 C1498.1,894.3 1491.5,898.5 1485.9,899.7 C1480.3,900.9 1474.4,900.2 1467.6,896.7 C1460.8,893.2 1451.0,884.8 1445.3,878.4 C1439.5,872.0 1435.1,865.3 1433.1,858.2 C1431.1,851.1 1431.9,843.9 1433.1,835.9 C1434.3,827.9 1437.7,818.1 1440.2,810.5 C1442.7,802.9 1445.8,794.9 1448.3,790.2 C1450.8,785.5 1453.4,782.1 1455.4,782.1 Z" fill="#59a331"/>
  <path d="M1496.0,810.5 C1498.5,814.4 1507.8,827.9 1511.2,833.8 C1514.6,839.7 1515.8,840.9 1516.3,846.0 C1516.8,851.1 1514.5,861.2 1514.2,864.2" fill="none" stroke="#74b844" stroke-width="11"/>
  <path d="M1518.3,841.9 C1521.3,842.6 1528.5,845.1 1536.6,846.0 C1544.7,846.9 1561.9,846.8 1567.0,847.0" fill="none" stroke="#74b844" stroke-width="9"/>
  <path d="M1522.4,850.0 C1524.8,851.4 1532.9,856.2 1536.6,858.2 C1540.3,860.2 1543.3,861.5 1544.7,862.2" fill="none" stroke="#74b844" stroke-width="9"/>
  <path d="M1524.4,854.1 C1525.1,856.1 1527.4,863.1 1528.4,866.3 C1529.4,869.5 1530.2,872.2 1530.5,873.4" fill="none" stroke="#74b844" stroke-width="9"/>
  <path d="M1540.9,808.9 C1544.1,808.4 1553.6,806.5 1560.0,806.0 C1566.4,805.5 1576.2,806.0 1579.5,806.0" fill="none" stroke="#74b844" stroke-width="7"/>
  <path d="M1564.6,803.0 C1567.8,801.8 1580.7,796.8 1583.9,795.6" fill="none" stroke="#74b844" stroke-width="5"/>
  <path d="M1576.5,805.9 C1579.0,803.5 1588.4,801.7 1594.3,802.2 C1600.2,802.7 1607.0,805.8 1612.1,808.9 C1617.2,812.0 1624.7,820.8 1624.7,820.8 C1624.7,820.8 1612.2,827.5 1606.1,828.2 C1600.0,828.9 1592.7,827.2 1588.3,825.2 C1583.9,823.2 1581.5,819.5 1579.5,816.3 C1577.5,813.1 1574.0,808.2 1576.5,805.9 Z"/>
  <path d="M1578.0,840.8 C1578.0,840.8 1599.0,847.3 1609.1,851.9 C1619.2,856.5 1628.8,861.5 1638.7,868.2 C1648.6,874.9 1668.4,891.9 1668.4,891.9 C1668.4,891.9 1656.0,893.6 1646.1,890.4 C1636.2,887.2 1619.2,879.0 1609.1,872.6 C1599.0,866.2 1590.6,857.2 1585.4,851.9 C1580.2,846.6 1578.0,840.8 1578.0,840.8 Z"/>
  <path d="M1632.8,844.5 C1638.5,845.2 1655.3,849.1 1668.4,854.8 C1681.5,860.5 1711.3,878.6 1711.3,878.6 C1711.3,878.6 1694.1,875.8 1683.2,872.6 C1672.3,869.4 1654.2,863.0 1646.1,859.3 C1637.9,855.6 1636.5,852.9 1634.3,850.4 C1632.1,847.9 1627.1,843.8 1632.8,844.5 Z"/>
  <path d="M1643.2,832.6 C1643.2,832.6 1659.8,825.9 1668.4,823.7 C1677.0,821.5 1687.6,823.0 1695.0,819.3 C1702.4,815.6 1706.1,808.7 1712.8,801.5 C1719.5,794.3 1727.2,782.1 1735.1,776.3 C1743.0,770.5 1754.6,767.2 1760.3,766.7 C1766.0,766.2 1770.1,770.5 1769.1,773.3 C1768.1,776.1 1754.3,783.7 1754.3,783.7 C1754.3,783.7 1768.9,786.9 1772.1,789.6 C1775.3,792.3 1774.8,797.5 1773.6,800.0 C1772.4,802.5 1771.4,804.0 1764.7,804.5 C1758.0,805.0 1744.2,798.1 1733.6,803.0 C1723.0,807.9 1701.0,834.1 1701.0,834.1 C1701.0,834.1 1697.3,838.3 1699.5,840.0 C1701.7,841.7 1712.3,842.5 1714.3,844.5 C1716.3,846.5 1714.0,851.4 1711.3,851.9 C1708.6,852.4 1702.7,849.9 1698.0,847.4 C1693.3,844.9 1690.6,839.0 1683.2,837.0 C1675.8,835.0 1660.2,836.3 1653.5,835.6 C1646.8,834.9 1643.2,832.6 1643.2,832.6 Z"/>
  <path d="M1733.7,836.5 C1736.6,833.6 1741.8,829.4 1749.3,828.7 C1756.8,828.1 1767.8,829.4 1778.5,832.6 C1789.2,835.9 1803.8,842.7 1813.6,848.2 C1823.3,853.7 1830.2,858.6 1837.0,865.8 C1843.8,872.9 1851.3,884.3 1854.6,891.1 C1857.8,897.9 1858.1,903.1 1856.5,906.7 C1854.9,910.3 1849.0,912.3 1844.8,912.6 C1840.6,912.9 1831.2,908.7 1831.2,908.7 C1831.2,908.7 1835.4,919.1 1835.1,924.3 C1834.8,929.5 1832.8,937.0 1829.2,939.9 C1825.6,942.8 1820.4,944.4 1813.6,941.8 C1806.8,939.2 1797.4,932.8 1788.3,924.3 C1779.2,915.8 1767.5,901.5 1759.0,891.1 C1750.5,880.7 1742.1,869.4 1737.6,861.9 C1733.0,854.4 1732.3,850.5 1731.7,846.3 C1731.1,842.1 1730.8,839.4 1733.7,836.5 Z" fill="url(#lg2)"/>
  <path d="M1761.0,819.0 C1767.8,812.8 1790.5,793.6 1801.9,781.9 C1813.3,770.2 1820.8,760.5 1829.2,748.8 C1837.7,737.1 1848.7,717.9 1852.6,711.7" fill="none" stroke="#74b844" stroke-width="8"/>
  <circle cx="1852.6" cy="711.7" r="6.5"/>
  <path d="M1821.4,756.6 C1822.1,751.4 1826.3,731.9 1825.3,725.4 C1824.3,718.9 1817.2,718.9 1815.6,717.6" fill="none" stroke="#74b844" stroke-width="7"/>
  <path d="M1825.3,764.4 C1830.2,762.8 1849.7,756.2 1854.6,754.6" fill="none" stroke="#74b844" stroke-width="7.5"/>
  <circle cx="1854.6" cy="754.6" r="5"/>
  <path d="M1813.6,774.1 C1815.9,776.0 1825.0,783.8 1827.3,785.8" fill="none" stroke="#74b844" stroke-width="7.5"/>
  <path d="M1856.5,729.3 C1857.8,727.3 1864.4,722.6 1868.0,720.0 C1871.6,717.4 1878.0,713.7 1878.0,713.7 C1878.0,713.7 1875.0,721.0 1872.0,724.0 C1869.0,727.0 1862.6,731.1 1860.0,732.0 C1857.4,732.9 1855.2,731.3 1856.5,729.3 Z"/>
  <path d="M1759.9,558.0 C1762.8,557.1 1770.3,565.0 1775.8,571.2 C1781.3,577.4 1787.9,585.4 1793.0,595.1 C1798.1,604.8 1802.8,618.2 1806.3,629.5 C1809.8,640.8 1812.4,650.3 1814.2,662.7 C1816.0,675.1 1816.9,703.8 1816.9,703.8 C1816.9,703.8 1807.4,700.4 1802.3,695.8 C1797.2,691.1 1790.8,684.7 1786.4,675.9 C1782.0,667.1 1779.1,653.8 1775.8,642.8 C1772.5,631.8 1769.4,620.6 1766.5,609.6 C1763.6,598.6 1759.7,585.1 1758.6,576.5 C1757.5,567.9 1757.0,558.9 1759.9,558.0 Z"/>
  <path d="M1863.3,561.9 C1866.2,562.3 1868.2,576.2 1868.6,583.1 C1869.0,590.0 1868.6,597.0 1865.9,603.0 C1863.2,609.0 1852.7,618.9 1852.7,618.9 C1852.7,618.9 1848.9,612.1 1848.7,605.7 C1848.5,599.3 1848.9,587.8 1851.3,580.5 C1853.7,573.2 1860.4,561.5 1863.3,561.9 Z"/>
  <circle cx="1885.8" cy="567.9" r="6.5"/>
  <path d="M1838.1,608.3 C1838.1,608.3 1843.8,623.3 1844.7,629.5 C1845.6,635.7 1845.0,641.2 1843.4,645.4 C1841.9,649.6 1838.1,655.1 1835.4,654.7 C1832.8,654.3 1828.4,647.9 1827.5,642.8 C1826.6,637.7 1828.3,630.0 1830.1,624.2 C1831.9,618.5 1838.1,608.3 1838.1,608.3 Z"/>
  <path d="M1835.4,652.0 C1833.9,656.0 1828.0,666.6 1826.2,675.9 C1824.4,685.2 1825.0,702.4 1824.8,707.7" fill="none" stroke="#74b844" stroke-width="6"/>
  <path d="M1872.6,620.0 C1870.4,623.8 1864.6,633.9 1859.3,642.8 C1854.0,651.7 1843.8,668.2 1840.7,673.3" fill="none" stroke="#74b844" stroke-width="8.5"/>
  <path d="M1862.0,641.5 C1865.1,639.7 1877.4,632.7 1880.5,630.9" fill="none" stroke="#74b844" stroke-width="7.5"/>
  <path d="M1860.0,704.0 C1860.0,704.0 1872.5,693.8 1880.0,690.0 C1887.5,686.2 1897.8,682.7 1905.0,681.0 C1912.2,679.3 1923.0,680.0 1923.0,680.0 C1923.0,680.0 1911.3,688.7 1905.0,692.0 C1898.7,695.3 1892.5,698.0 1885.0,700.0 C1877.5,702.0 1860.0,704.0 1860.0,704.0 Z"/>
  <path d="M1880.0,703.0 C1880.0,703.0 1892.5,699.5 1900.0,700.0 C1907.5,700.5 1925.0,706.0 1925.0,706.0 C1925.0,706.0 1912.5,710.5 1905.0,710.0 C1897.5,709.5 1880.0,703.0 1880.0,703.0 Z"/>
  <path d="M1854.0,730.0 C1854.0,730.0 1861.5,722.8 1866.0,720.0 C1870.5,717.2 1881.0,713.0 1881.0,713.0 C1881.0,713.0 1876.5,723.2 1872.0,726.0 C1867.5,728.8 1854.0,730.0 1854.0,730.0 Z"/>
  <ellipse cx="1897" cy="737" rx="12" ry="9" transform="rotate(20 1897 737)"/>
  <ellipse cx="1902" cy="770" rx="7" ry="3" transform="rotate(0 1902 770)"/>
  <path d="M2040.0,700.0 C2040.0,700.0 2048.3,702.0 2052.0,705.0 C2055.7,708.0 2062.0,718.0 2062.0,718.0 C2062.0,718.0 2053.7,715.0 2050.0,712.0 C2046.3,709.0 2040.0,700.0 2040.0,700.0 Z"/>
  <ellipse cx="2053" cy="717" rx="7" ry="3" transform="rotate(0 2053 717)"/>
  <path d="M2043.0,694.0 C2043.5,692.8 2051.3,689.8 2055.0,690.0 C2058.7,690.2 2065.5,693.8 2065.0,695.0 C2064.5,696.2 2055.7,697.2 2052.0,697.0 C2048.3,696.8 2042.5,695.2 2043.0,694.0 Z"/>
  <path d="M1526.0,750.0 C1526.0,750.0 1530.7,737.8 1535.0,732.0 C1539.3,726.2 1548.7,717.3 1552.0,715.0 C1555.3,712.7 1555.0,718.0 1555.0,718.0 C1555.0,718.0 1549.2,729.3 1545.0,735.0 C1540.8,740.7 1533.2,749.5 1530.0,752.0 C1526.8,754.5 1526.0,750.0 1526.0,750.0 Z"/>
  <path d="M1517.0,765.0 C1517.0,765.0 1526.2,759.5 1530.0,757.0 C1533.8,754.5 1537.5,751.9 1540.0,750.0 C1542.5,748.1 1545.0,745.5 1545.0,745.5 C1545.0,745.5 1548.2,746.9 1548.0,748.0 C1547.8,749.1 1544.0,752.0 1544.0,752.0 C1544.0,752.0 1552.8,750.2 1555.0,750.5 C1557.2,750.8 1557.5,754.0 1557.5,754.0 C1557.5,754.0 1546.2,755.6 1546.0,756.0 C1545.8,756.4 1556.0,756.5 1556.0,756.5 C1556.0,756.5 1557.5,759.3 1555.0,760.0 C1552.5,760.7 1541.0,760.5 1541.0,760.5 C1541.0,760.5 1529.0,764.8 1525.0,765.5 C1521.0,766.2 1517.0,765.0 1517.0,765.0 Z"/>
  <path d="M1578.0,778.0 C1578.0,778.0 1589.3,775.8 1595.0,777.0 C1600.7,778.2 1608.2,781.8 1612.0,785.0 C1615.8,788.2 1620.0,795.2 1618.0,796.0 C1616.0,796.8 1600.0,790.0 1600.0,790.0 C1600.0,790.0 1578.0,778.0 1578.0,778.0 Z"/>
  <path d="M1668.0,741.0 C1670.0,739.2 1676.3,731.0 1680.0,730.0 C1683.7,729.0 1688.3,734.2 1690.0,735.0" fill="none" stroke="#74b844" stroke-width="4"/>
  <path d="M1132.0,826.0 C1132.0,826.0 1144.0,821.3 1148.0,822.0 C1152.0,822.7 1157.3,827.3 1156.0,830.0 C1154.7,832.7 1144.3,835.8 1140.0,838.0 C1135.7,840.2 1131.3,845.0 1130.0,843.0 C1128.7,841.0 1132.0,826.0 1132.0,826.0 Z"/>
  <path d="M1150.0,842.0 C1150.0,842.0 1159.5,832.8 1165.0,830.0 C1170.5,827.2 1183.0,825.0 1183.0,825.0 C1183.0,825.0 1175.5,835.2 1170.0,838.0 C1164.5,840.8 1150.0,842.0 1150.0,842.0 Z"/>
  <path d="M1222.0,951.0 C1222.0,951.0 1235.0,952.2 1240.0,955.0 C1245.0,957.8 1252.0,968.0 1252.0,968.0 C1252.0,968.0 1243.0,964.8 1238.0,962.0 C1233.0,959.2 1222.0,951.0 1222.0,951.0 Z"/>
  <path d="M1262.0,892.0 C1264.2,892.8 1272.0,894.8 1275.0,897.0 C1278.0,899.2 1279.2,903.7 1280.0,905.0" fill="none" stroke="#74b844" stroke-width="3"/>
  <path d="M1265.0,900.0 C1267.5,901.7 1275.5,906.3 1280.0,910.0 C1284.5,913.7 1290.0,920.0 1292.0,922.0" fill="none" stroke="#74b844" stroke-width="3"/>
 </g>
</g>

</defs></svg>
<div id="header">
  <!-- hamburger -->
  <div class="abs" style="left:56px;top:53px;width:28px;height:3px;background:#3d5fe0;border-radius:2px"></div>
  <div class="abs" style="left:56px;top:60px;width:28px;height:3px;background:#3d5fe0;border-radius:2px"></div>
  <div class="abs" style="left:56px;top:67px;width:28px;height:3px;background:#3d5fe0;border-radius:2px"></div>
  <div class="abs" style="left:120.5px;top:46.5px;font-size:30px;color:#3a3d4a;white-space:nowrap;letter-spacing:1.55px;-webkit-text-stroke:0.9px #3a3d4a">Colorfur Nature</div>
  <!-- undo redo cloud -->
  <svg class="abs" style="left:500px;top:45px" width="40" height="30" viewBox="0 0 40 30">
    <path d="M9.5 17.5 Q20.5 5 34 20.5" fill="none" stroke="#3b3e4a" stroke-width="3.4" stroke-linecap="round"/>
    <path d="M5 12.6 Q5 11.8 5.7 12.4 L14 20.8 Q14.5 21.6 13.6 21.6 L5.8 21.6 Q5 21.6 5 20.8 Z" fill="#3b3e4a"/>
  </svg>
  <svg class="abs" style="left:565px;top:45px" width="40" height="30" viewBox="0 0 40 30">
    <path d="M5.8 20.5 Q19.3 5 30.3 17.5" fill="none" stroke="#a9abb0" stroke-width="3" stroke-linecap="round"/>
    <path d="M34.8 12.6 Q34.8 11.8 34.1 12.4 L25.8 20.8 Q25.3 21.6 26.2 21.6 L34 21.6 Q34.8 21.6 34.8 20.8 Z" fill="#a9abb0"/>
  </svg>
  <svg class="abs" style="left:630px;top:45px" width="44" height="30" viewBox="0 0 44 30">
    <path d="M9 27 Q2 27 2 20 Q2 13 10 13 Q12 2 21 2 Q30 2 31 10 Q41 10 41 19 Q41 27 33 27 Z" fill="#d3d4d8"/>
    <path d="M15 17 L19 22 L26 11" fill="none" stroke="#fff" stroke-width="2.6" stroke-linecap="round" stroke-linejoin="round"/>
  </svg>
  <!-- toolbar -->
  <svg class="abs" style="left:808px;top:31px" width="36" height="34" viewBox="0 0 36 34">
    <path d="M31.5 2.5 Q33 3.5 32 5 L20.5 21 Q18.5 23.5 16 22.5 L14.5 21.5 Q13 19.5 14.5 17.5 L29 3 Q30.5 1.8 31.5 2.5 Z" fill="#3e7be6"/>
    <path d="M13 20.5 L16.5 23.5 Q15.5 29 9.5 30.5 Q6.5 31 5.5 29.5 Q5 28 6.5 26.5 Q8 25 9 23 Q10.5 20 13 20.5 Z" fill="#3e7be6"/>
  </svg>
  <div class="abs" style="left:883px;top:35px;width:1.5px;height:50px;background:#e2e3e6"></div>
  <svg class="abs" style="left:926px;top:30px" width="36" height="30" viewBox="0 0 36 30">
    <path d="M8.1 3 V12.8 M3.2 7.9 H13" stroke="#46ad52" stroke-width="2.6" fill="none"/>
    <path d="M13 8.7 H28 Q32 8.7 32 12.7 V22.5 Q32 26.5 28 26.5 H11.6 Q7.6 26.5 7.6 22.5 V13" fill="none" stroke="#46ad52" stroke-width="2.7"/>
  </svg>
  <svg class="abs" style="left:1026px;top:32px" width="32" height="30" viewBox="0 0 32 30">
    <path d="M3 10 V3 H29 V10 M16 3 V27 M10 27 H22" fill="none" stroke="#3b3e4a" stroke-width="2.6" stroke-linejoin="round"/>
  </svg>
  <svg class="abs" style="left:1122px;top:34px" width="34" height="26" viewBox="0 0 34 26">
    <rect x="2" y="2" width="29" height="21" rx="3.5" fill="#3b3e4a"/>
    <path d="M6 19 L12 12 L16 16 L20 11 L27 19 Z" fill="#fff"/>
    <circle cx="22" cy="8" r="2" fill="#fff"/>
  </svg>
  <svg class="abs" style="left:1220px;top:34px" width="34" height="26" viewBox="0 0 34 26">
    <rect x="3.2" y="2.5" width="15.5" height="15.2" rx="2" fill="#3b3e4a"/>
    <path d="M19.5 5 L34 26 H9.5 Z" fill="#fff"/>
    <path d="M19.4 9.6 Q20.2 8.4 21 9.6 L31.6 22 Q32.4 23.6 30.8 23.6 H13.8 Q12.2 23.6 13 22 Z" fill="#3b3e4a"/>
  </svg>
  <svg class="abs" style="left:1347px;top:30px" width="34" height="34" viewBox="0 0 34 34">
    <path d="M16.4 3.5 Q17 3 17.6 3.5 L29.5 12.6 Q30 13.5 29.5 14 L17.6 23 Q17 23.5 16.4 23 L4.5 14 Q4 13.5 4.5 12.6 Z" fill="#3b3e4a"/>
    <path d="M4.3 20.3 L17 30 L29.7 20.3" fill="none" stroke="#3b3e4a" stroke-width="3.2" stroke-linejoin="round"/>
  </svg>
  <svg class="abs" style="left:1468px;top:40px" width="36" height="14" viewBox="0 0 36 14">
    <circle cx="6" cy="7" r="3.3" fill="#3b3e4a"/><circle cx="18" cy="7" r="3.3" fill="#3b3e4a"/><circle cx="30" cy="7" r="3.3" fill="#3b3e4a"/>
  </svg>
  <div class="tb" style="left:799px;top:77px;letter-spacing:0.95px">Style</div>
  <div class="tb" style="left:913px;top:77px;letter-spacing:0.3px">Frame</div>
  <div class="tb" style="left:1021px;top:77px;letter-spacing:0.6px">Text</div>
  <div class="tb" style="left:1106px;top:77px;letter-spacing:0.75px">Media</div>
  <div class="tb" style="left:1205px;top:77px;letter-spacing:0.3px">Shape</div>
  <div class="tb" style="left:1304px;top:77px;letter-spacing:0.68px">Story block</div>
  <div class="tb" style="left:1460px;top:77px;letter-spacing:0.67px">More</div>
  <!-- right buttons -->
  <div class="abs" style="left:1855px;top:33px;width:57px;height:57px;background:#dcdde0;border-radius:6px"></div>
  <svg class="abs" style="left:1864px;top:48px" width="40" height="26" viewBox="0 0 40 26">
    <path d="M1.8 13 Q8 2.5 19.5 2.5 Q31 2.5 37.5 13 Q31 23.5 19.5 23.5 Q8 23.5 1.8 13 Z" fill="#3b3e4a"/>
    <circle cx="19.5" cy="13" r="7.2" fill="#dcdde0"/>
    <path d="M19.5 8.3 V13 H24.2 A4.7 4.7 0 1 1 19.5 8.3 Z" fill="#3b3e4a"/>
  </svg>
  <div class="abs" style="left:1948px;top:33px;width:199px;height:57px;background:#2f56e3;border-radius:6px"></div>
  <svg class="abs" style="left:1964px;top:47px" width="28" height="30" viewBox="0 0 28 30">
    <path d="M4 5 Q4 1 8 3 L23 12 Q26 14.5 23 17 L8 26 Q4 28 4 24 Z" fill="#fff"/>
  </svg>
  <div class="abs" style="left:2005px;top:46px;font-size:26px;color:#fff;white-space:nowrap;letter-spacing:0.1px;-webkit-text-stroke:0.5px #fff">Present</div>
  <svg class="abs" style="left:2110px;top:56px" width="18" height="12" viewBox="0 0 18 12"><path d="M2 3 H15 L8.5 10 Z" fill="#fff"/></svg>
  <div class="abs" style="left:2162px;top:33px;width:100px;height:57px;background:#dcdde0;border-radius:6px"></div>
  <svg class="abs" style="left:2174px;top:45px" width="34" height="32" viewBox="0 0 34 32">
    <path d="M10 15.5 H7 Q4.5 15.5 4.5 18 V24.5 Q4.5 27 7 27 H27 Q29.5 27 29.5 24.5 V18 Q29.5 15.5 27 15.5 H24" fill="none" stroke="#3b3e4a" stroke-width="2.6" stroke-linecap="round"/>
    <path d="M17 20.5 V6" stroke="#3b3e4a" stroke-width="2.6" stroke-linecap="round"/>
    <path d="M11.8 9.5 L17 3.5 L22.2 9.5 Z" fill="#3b3e4a" stroke="#3b3e4a" stroke-width="1" stroke-linejoin="round"/>
  </svg>
  <svg class="abs" style="left:2225px;top:56px" width="18" height="12" viewBox="0 0 18 12"><path d="M2 3 H15 L8.5 10 Z" fill="#3b3e4a"/></svg>
</div>
<div id="sidebar">
  <div class="abs" style="left:0;top:0;width:490px;height:293px;background:#f4f5f7"></div>
  <div class="abs" style="left:0;top:0;width:490px;height:2.5px;background:#cdcfd2"></div>
  <!-- overview thumb -->
  <div class="abs" style="left:41px;top:37px;width:364px;height:208px;border:3.5px solid #4b80f0;border-radius:10px;background:#0a1c46;overflow:hidden">
    <svg width="357" height="201" viewBox="522 213 1749 983" preserveAspectRatio="none" style="position:absolute;left:0;top:0"><use href="#scene" style="--fv:hidden"/></svg>
  </div>
  <div class="abs" style="left:56px;top:117px;width:49px;height:49px;border-radius:50%;background:#fff"></div>
  <svg class="abs" style="left:66px;top:126px" width="30" height="30" viewBox="0 0 30 30">
    <path d="M15 1.5 L28.5 14 L25 14 L25 28 Q25 29 24 29 L18.5 29 L18.5 19.5 L11.5 19.5 L11.5 29 L6 29 Q5 29 5 28 L5 14 L1.5 14 Z" fill="#3b3e4a"/>
  </svg>
  <div class="lbl" style="left:171px;top:260px;letter-spacing:1.83px">Overview</div>
  <!-- timeline -->
  <div class="abs" style="left:61px;top:293px;width:7px;height:870px;background:#ebecef"></div>
  <div class="abs" style="left:53px;top:405px;width:24px;height:24px;border-radius:50%;background:#dcdee2;box-shadow:0 0 0 7px #fff"></div>
  <div class="abs" style="left:53px;top:675px;width:24px;height:24px;border-radius:50%;background:#dcdee2;box-shadow:0 0 0 7px #fff"></div>
  <div class="abs" style="left:53px;top:944px;width:24px;height:24px;border-radius:50%;background:#dcdee2;box-shadow:0 0 0 7px #fff"></div>

  <!-- item 1 -->
  <svg class="abs" style="left:88px;top:324.5px" width="322" height="188" viewBox="0 0 322 188"><g fill="none" stroke="#b9bcc1" stroke-width="2"><path d="M1 27 V1 H28"/><path d="M294 1 H320 V27"/><path d="M320 160 V186 H294"/><path d="M28 186 H1 V160"/></g></svg>
  <div class="abs" style="left:95px;top:331.5px;width:306.5px;height:172px;border-radius:7px;overflow:hidden;background:#0a1c46;box-shadow:0 0 0 1px #d8dade">
    <svg width="306.5" height="172" viewBox="1105 384 523 293.5" preserveAspectRatio="none" style="position:absolute;left:0;top:0"><use href="#scene" style="--fv:hidden"/></svg>
  </div>
  <div class="abs" style="left:106px;top:394px;width:47px;height:47px;border-radius:50%;background:#fff"></div>
  <div class="abs" style="left:106px;top:404.5px;width:47px;text-align:center;font-size:22px;color:#2f323c;-webkit-text-stroke:0.7px #2f323c">1</div>
  <svg class="abs" style="left:412px;top:336px" width="26" height="32" viewBox="0 0 26 32">
    <path d="M13 1 C6 1 1.5 6 1.5 12.5 C1.5 20 13 31 13 31 C13 31 24.5 20 24.5 12.5 C24.5 6 20 1 13 1 Z" fill="#a4a7ac"/>
    <circle cx="13" cy="11.5" r="3.6" fill="#fff"/>
  </svg>
  <div class="lbl" style="left:165px;top:522px;letter-spacing:1.54px">Zoom to Frame</div>

  <!-- item 2 -->
  <svg class="abs" style="left:88px;top:594px" width="322" height="188" viewBox="0 0 322 188"><g fill="none" stroke="#b9bcc1" stroke-width="2"><path d="M1 27 V1 H28"/><path d="M294 1 H320 V27"/><path d="M320 160 V186 H294"/><path d="M28 186 H1 V160"/></g></svg>
  <div class="abs" style="left:95px;top:600.5px;width:306.5px;height:172.5px;border-radius:7px;overflow:hidden;background:#0a1c46;box-shadow:0 0 0 1px #d8dade">
    <svg width="306.5" height="172.5" viewBox="522 213 1749 983" preserveAspectRatio="none" style="position:absolute;left:0;top:0"><use href="#scene" style="--fv:hidden"/></svg>
  </div>
  <div class="abs" style="left:106px;top:664px;width:47px;height:47px;border-radius:50%;background:#fff"></div>
  <div class="abs" style="left:106px;top:674.5px;width:47px;text-align:center;font-size:22px;color:#2f323c;-webkit-text-stroke:0.7px #2f323c">2</div>
  <div class="lbl" style="left:147px;top:791px;letter-spacing:1.6px">Zoom to Overview</div>

  <!-- item 3 -->
  <svg class="abs" style="left:88px;top:863px" width="322" height="188" viewBox="0 0 322 188"><g fill="none" stroke="#b9bcc1" stroke-width="2"><path d="M1 27 V1 H28"/><path d="M294 1 H320 V27"/><path d="M320 160 V186 H294"/><path d="M28 186 H1 V160"/></g></svg>
  <div class="abs" style="left:95px;top:868.5px;width:307px;height:175px;border-radius:7px;overflow:hidden;background:linear-gradient(180deg,#ededee,#e9e9ea);box-shadow:0 0 0 1px #d2d4d8">
    <svg width="307" height="175" viewBox="0 0 307 175" style="position:absolute;left:0;top:0">
      <path d="M0 1 L36 1 L0 27 Z" fill="#0a1c46"/>
      <path d="M21 48 L31 42 L43 42 L43 80 L31 80 L31 56 L21 58 Z" fill="#5a9f36"/>
      <text x="73" y="58.5" font-family="Liberation Sans" font-weight="bold" font-size="19.5" fill="#1c2a55" textLength="170" lengthAdjust="spacingAndGlyphs">Wildlife's Colorful</text>
      <text x="73" y="85.5" font-family="Liberation Sans" font-weight="bold" font-size="19.5" fill="#1c2a55" textLength="71" lengthAdjust="spacingAndGlyphs">Display</text>
      <rect x="73" y="101" width="102" height="2.5" fill="#c2c5cc"/>
      <g fill="none" stroke="#6cb03f" stroke-linecap="round">
        <path d="M263 133 Q280 140 305 148" stroke-width="5"/>
        <path d="M268 124 Q285 130 300 140" stroke-width="4"/>
        <path d="M278 127 Q290 126 300 133" stroke-width="4"/>
        <path d="M270 153 Q285 148 300 146" stroke-width="4"/>
      </g>
      <path d="M218 175 Q218 163 225 162 Q235 165 240 175 Z" fill="#6cb03f"/>
    </svg>
  </div>
  <div class="abs" style="left:107.5px;top:934.5px;width:44px;height:44px;border-radius:50%;background:#fff"></div>
  <div class="abs" style="left:107.5px;top:943.5px;width:44px;text-align:center;font-size:22px;color:#2f323c;-webkit-text-stroke:0.7px #2f323c">3</div>
  <div class="lbl" style="left:164px;top:1061px;letter-spacing:1.54px">Zoom to Frame</div>

  <!-- item 4 -->
  <svg class="abs" style="left:88px;top:1133px" width="322" height="188" viewBox="0 0 322 188"><g fill="none" stroke="#b9bcc1" stroke-width="2"><path d="M1 27 V1 H28"/><path d="M294 1 H320 V27"/><path d="M320 160 V186 H294"/><path d="M28 186 H1 V160"/></g></svg>
  <div class="abs" style="left:95px;top:1138.5px;width:307px;height:175px;border-radius:7px;background:#ebebec;box-shadow:0 0 0 1px #d2d4d8"></div>
  <div class="abs" style="left:0;top:1155px;width:490px;height:2px;background:#d9dadd"></div>
</div>
<div id="canvas">
  <svg width="1814" height="1157" viewBox="490 125 1814 1157" style="position:absolute;left:0;top:0">
    <rect x="523.6" y="214.1" width="1746.6" height="980.6" fill="none" stroke="#ffffff" stroke-width="2.2"/>
    <use href="#scene"/>
    <rect x="1104" y="385" width="525" height="294" rx="12" fill="none" stroke="#9ca1a8" stroke-width="2.6"/>
    <rect x="1106.5" y="387.5" width="520" height="289" rx="10" fill="none" stroke="#ffffff" stroke-width="3"/>
  </svg>
  <!-- bottom toolbar -->
  <div class="abs" style="left:576.5px;top:1063px;width:661px;height:72px;background:#fff;border-radius:14px"></div>
  <div class="abs" style="left:591.5px;top:1071px;width:121px;height:56px;background:#ecedf0;border-radius:13px"></div>
  <div class="abs" style="left:595px;top:1074px;width:57px;height:50px;background:#fff;border-radius:12px"></div>
  <svg class="abs" style="left:608px;top:1083px" width="34" height="34" viewBox="0 0 34 34">
    <path d="M4.8 3.6 Q4.3 3 5.2 3.4 L25.2 20.4 Q25.8 21 25 21.1 L14.7 22.6 L8 29.6 Q7.3 30.2 7.2 29.3 Z" fill="#2f55e3" stroke="#2f55e3" stroke-width="0.8" stroke-linejoin="round"/>
  </svg>
  <svg class="abs" style="left:662px;top:1082px" width="34" height="34" viewBox="0 0 34 34">
    <g stroke="#3b3e4a" stroke-width="3.6" stroke-linecap="round" fill="none">
      <path d="M13.4 8.2 L15.2 21"/><path d="M19.2 5.2 L19.4 20"/><path d="M24.4 8.4 L23 21"/><path d="M28.8 13.3 L25.6 23"/><path d="M6.2 20.2 L12 25"/>
    </g>
    <path d="M12.5 17 L27.4 19.5 Q27 31.5 19.3 31.5 Q14 31.5 10 26 Z" fill="#3b3e4a"/>
  </svg>
  <div class="abs" style="left:728px;top:1074.5px;width:1.5px;height:50px;background:#dadbde"></div>
  <svg class="abs" style="left:758px;top:1083px" width="24" height="32" viewBox="0 0 24 32">
    <path d="M18 3 L6 16 L18 29" fill="none" stroke="#b4b6bb" stroke-width="2.6" stroke-linecap="round" stroke-linejoin="round"/>
  </svg>
  <svg class="abs" style="left:830px;top:1083px" width="24" height="32" viewBox="0 0 24 32">
    <path d="M5 3 L17 16 L5 29" fill="none" stroke="#3b3e4a" stroke-width="2.6" stroke-linecap="round" stroke-linejoin="round"/>
  </svg>
  <div class="abs" style="left:888.5px;top:1074.5px;width:1.5px;height:50px;background:#dadbde"></div>
  <svg class="abs" style="left:917px;top:1083px" width="32" height="32" viewBox="0 0 30 30">
    <path d="M15 1.5 L28.5 14 L25 14 L25 28 Q25 29 24 29 L18.5 29 L18.5 19.5 L11.5 19.5 L11.5 29 L6 29 Q5 29 5 28 L5 14 L1.5 14 Z" fill="#3b3e4a"/>
  </svg>
  <div class="abs" style="left:976px;top:1074.5px;width:1.5px;height:50px;background:#dadbde"></div>
  <div class="abs" style="left:1009px;top:1098px;width:25px;height:2.6px;background:#3b3e4a;border-radius:1px"></div>
  <div class="abs" style="left:1079px;top:1086.5px;font-size:23px;color:#3b3e4a;letter-spacing:-0.2px;white-space:nowrap;-webkit-text-stroke:0.7px #3b3e4a">100%</div>
  <div class="abs" style="left:1180px;top:1098px;width:28px;height:2.6px;background:#3b3e4a;border-radius:1px"></div>
  <div class="abs" style="left:1192.7px;top:1085px;width:2.6px;height:28px;background:#3b3e4a;border-radius:1px"></div>
</div>
</body></html>
